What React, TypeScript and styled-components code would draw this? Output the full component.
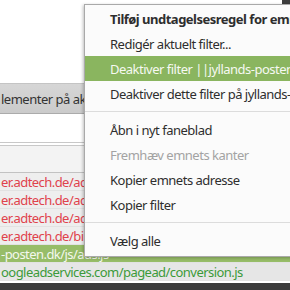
import styled, { createGlobalStyle } from "styled-components";

const Global = createGlobalStyle`
  html, body {
    margin: 0;
    padding: 0;
    background: #fff;
  }
  body {
    font-family: "Noto Sans", "Open Sans", sans-serif;
  }
`;

const Screen = styled.div`
  position: relative;
  width: 290px;
  height: 290px;
  overflow: hidden;
  display: flex;
  flex-direction: column;
  background: #fff;
`;

const TopArea = styled.div`
  height: 83px;
  display: flex;
  justify-content: flex-end;
  align-items: flex-start;
`;

const CornerBlock = styled.div`
  width: 8px;
  height: 6px;
  background: #3d3d3d;
`;

const Bar = styled.div`
  height: 29px;
  background: linear-gradient(#d6d6d6, #cbcbcb);
  border-top: 1px solid #c4c4c4;
  border-bottom: 1px solid #ababab;
  display: flex;
  align-items: center;
  padding-left: 1px;
  font-size: 13px;
  letter-spacing: -0.5px;
  color: #333;
  white-space: nowrap;
  overflow: hidden;
`;

const Blank = styled.div`
  height: 28px;
  background: #fff;
  border-bottom: 1px solid #c8c8c8;
`;

const TableHead = styled.div`
  height: 26px;
  margin-top: 2px;
  background: #f3f3f3;
  border-top: 1px solid #c8c8c8;
  border-bottom: 1px solid #c2c2c2;
`;

const Rows = styled.div`
  display: flex;
  flex-direction: column;
`;

const Row = styled.div<{ $kind: "blocked" | "selected" | "ok" }>`
  height: 18px;
  display: flex;
  align-items: center;
  padding-left: 1px;
  font-size: 13px;
  letter-spacing: -0.55px;
  white-space: nowrap;
  overflow: hidden;
  background: ${(p) =>
    p.$kind === "selected" ? "#97bd68" : p.$kind === "ok" ? "#e6e6e6" : "#eeeeee"};
  color: ${(p) =>
    p.$kind === "selected" ? "#f4f8ee" : p.$kind === "ok" ? "#3c9a3a" : "#e0424c"};
  border-bottom: 1px solid #e2e2e2;
  box-sizing: border-box;
`;

const Footer = styled.div`
  margin-top: auto;
  height: 7px;
  background: #3b3b3b;
`;

const Menu = styled.div`
  position: absolute;
  left: 84px;
  top: 4px;
  width: 260px;
  padding: 1px 0 3px;
  background: #fbfbfb;
  border: 1px solid #a9a9a9;
  box-shadow: -1px 1px 3px rgba(0, 0, 0, 0.25);
  display: flex;
  flex-direction: column;
`;

const Item = styled.div<{ $bold?: boolean; $active?: boolean; $disabled?: boolean }>`
  height: 25px;
  display: flex;
  align-items: center;
  padding-left: 25px;
  font-size: 13px;
  letter-spacing: -0.5px;
  white-space: nowrap;
  overflow: hidden;
  font-weight: ${(p) => (p.$bold ? 700 : 400)};
  color: ${(p) => (p.$active ? "#f6f9f2" : p.$disabled ? "#a3a3a3" : "#2e2e2e")};
  background: ${(p) => (p.$active ? "#8ab55f" : "transparent")};
`;

const Separator = styled.div`
  height: 11px;
  display: flex;
  align-items: center;
  &::after {
    content: "";
    flex: 1;
    height: 1px;
    background: #dcdcdc;
  }
`;

const rows: { text: string; kind: "blocked" | "selected" | "ok" }[] = [
  { text: "er.adtech.de/addyn/3.0/1211/", kind: "blocked" },
  { text: "er.adtech.de/adiframe/3.0/", kind: "blocked" },
  { text: "er.adtech.de/addyn/3.0/1211", kind: "blocked" },
  { text: "er.adtech.de/bind?ckey1=", kind: "blocked" },
  { text: "-posten.dk/js/ads.js", kind: "selected" },
  { text: "oogleadservices.com/pagead/conversion.js", kind: "ok" },
];

export default function App() {
  return (
    <Screen>
      <Global />
      <TopArea>
        <CornerBlock />
      </TopArea>
      <Bar>lementer på aktuel side</Bar>
      <Blank />
      <TableHead />
      <Rows>
        {rows.map((r, i) => (
          <Row key={i} $kind={r.kind}>
            {r.text}
          </Row>
        ))}
      </Rows>
      <Footer />
      <Menu>
        <Item $bold>Tilføj undtagelsesregel for emnet</Item>
        <Item>Redigér aktuelt filter...</Item>
        <Item $active>Deaktiver filter ||jyllands-posten.dk/js/ads.js</Item>
        <Item>Deaktiver dette filter på jyllands-posten.dk</Item>
        <Separator />
        <Item>Åbn i nyt faneblad</Item>
        <Item $disabled>Fremhæv emnets kanter</Item>
        <Item>Kopier emnets adresse</Item>
        <Item>Kopier filter</Item>
        <Separator />
        <Item>Vælg alle</Item>
      </Menu>
    </Screen>
  );
}
